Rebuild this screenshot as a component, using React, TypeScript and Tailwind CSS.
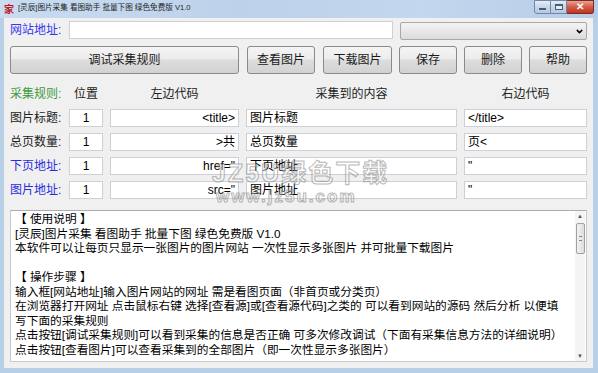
import { ChevronDown } from "lucide-react";

const font = "font-['Liberation_Sans','Noto_Sans_CJK_SC',sans-serif]";
const btn =
  "h-[28px] rounded-[3px] border border-[#8a8a8a] bg-[linear-gradient(#f4f4f4,#ececec_45%,#dddddd_50%,#d2d2d2)] text-[12px] text-[#1a1a1a] flex items-center justify-center";
const field = "h-[18px] bg-white border border-[#cdd0d6] text-[12px] leading-[16px] text-black px-[3px] overflow-hidden whitespace-nowrap";

const rows = [
  { label: "图片标题:", color: "text-[#222]", left: "<title>", content: "图片标题", right: "</title>" },
  { label: "总页数量:", color: "text-[#222]", left: ">共", content: "总页数量", right: "页<", focus: true },
  { label: "下页地址:", color: "text-[#2b2bdf]", left: 'href="', content: "下页地址", right: '"' },
  { label: "图片地址:", color: "text-[#2b2bdf]", left: 'src="', content: "图片地址", right: '"' },
];

const lines = [
  "【 使用说明 】",
  "[灵辰]图片采集 看图助手 批量下图 绿色免费版 V1.0",
  "本软件可以让每页只显示一张图片的图片网站 一次性显示多张图片 并可批量下载图片",
  "",
  "【 操作步骤 】",
  "输入框[网站地址]输入图片网站的网址 需是看图页面（非首页或分类页）",
  "在浏览器打开网址 点击鼠标右键 选择[查看源]或[查看源代码]之类的 可以看到网站的源码 然后分析 以便填",
  "写下面的采集规则",
  "点击按钮[调试采集规则]可以看到采集的信息是否正确 可多次修改调试（下面有采集信息方法的详细说明）",
  "点击按钮[查看图片]可以查看采集到的全部图片（即一次性显示多张图片）",
];

function TitleBar() {
  return (
    <div className="h-[18px] flex items-start bg-[linear-gradient(90deg,#c9dcf0,#bcd2ea_40%,#c3d7ee_70%,#b6cde8)]">
      <div className="w-[11px] h-[11px] ml-[4px] mt-[3px] text-[10px] leading-[11px] font-bold text-[#c0161c] font-['Noto_Sans_CJK_SC',sans-serif]">
        家
      </div>
      <div className="ml-[3px] mt-[3px] text-[7.6px] leading-[10px] text-[#1e1e1e] whitespace-nowrap">
        [灵辰]图片采集 看图助手 批量下图 绿色免费版 V1.0
      </div>
      <div className="ml-auto mr-[4px] flex">
        <div className="w-[17px] h-[14px] border border-[#6f86a4] rounded-bl-[3px] bg-[linear-gradient(#e4edf7,#c6d6ea_50%,#b5c9e2)] flex items-end justify-center pb-[3px]">
          <div className="w-[7px] h-[2px] bg-white border border-[#4a5c74]" />
        </div>
        <div className="w-[16px] h-[14px] border-y border-r border-[#6f86a4] bg-[linear-gradient(#e4edf7,#c6d6ea_50%,#b5c9e2)] flex items-center justify-center">
          <div className="w-[8px] h-[6px] border border-[#4a5c74] border-t-2 bg-white/60" />
        </div>
        <div className="w-[27px] h-[14px] border-y border-r border-[#7a2b24] rounded-br-[3px] bg-[linear-gradient(#e8a496,#d45a44_50%,#c2341e)] flex items-center justify-center text-white text-[10px] font-bold leading-none">
          ✕
        </div>
      </div>
    </div>
  );
}

export default function App() {
  return (
    <div className={`${font} w-[598px] h-[373px] bg-[#b8cfe8] flex flex-col relative overflow-hidden`}>
      <TitleBar />
      <div className="flex-1 ml-[4px] mr-[5px] mb-[5px] bg-[#f0f0f0] pl-[6px] pr-[6px] pt-[3px] flex flex-col">
        {/* url row */}
        <div className="flex items-start h-[19px]">
          <div className="w-[59px] text-[12px] leading-[18px] text-[#3737f0]">网站地址:</div>
          <div className={`${field} w-[324px]`} />
          <div className="ml-[7px] mt-[1px] w-[187px] h-[18px] rounded-[2px] border border-[#a9a9a9] bg-[linear-gradient(#f3f3f3,#e8e8e8_50%,#dcdcdc)] flex items-center justify-end pr-[2px]">
            <ChevronDown className="w-[9px] h-[9px] text-black" strokeWidth={4} />
          </div>
        </div>

        {/* buttons */}
        <div className="flex mt-[6px]">
          <div className={`${btn} w-[229px]`}>调试采集规则</div>
          <div className={`${btn} w-[68px] ml-[8px]`}>查看图片</div>
          <div className={`${btn} w-[69px] ml-[8px]`}>下载图片</div>
          <div className={`${btn} w-[58px] ml-[7px]`}>保存</div>
          <div className={`${btn} w-[58px] ml-[7px]`}>删除</div>
          <div className={`${btn} w-[58px] ml-[7px]`}>帮助</div>
        </div>

        {/* headers */}
        <div className="flex mt-[11px] h-[18px] text-[12px] leading-[18px] text-[#222]">
          <div className="w-[59px] text-[#3c9a3c]">采集规则:</div>
          <div className="w-[34px] text-center">位置</div>
          <div className="w-[129px] ml-[7px] text-center">左边代码</div>
          <div className="w-[211px] ml-[7px] text-center">采集到的内容</div>
          <div className="w-[123px] ml-[7px] text-center">右边代码</div>
        </div>

        {/* rule rows */}
        <div className="flex flex-col gap-[6px] mt-[6px]">
          {rows.map((r) => (
            <div key={r.label} className="flex items-center">
              <div className={`w-[59px] text-[12px] leading-[18px] ${r.color}`}>{r.label}</div>
              <div className={`${field} w-[34px] text-center`}>1</div>
              <div className={`${field} w-[129px] ml-[7px] text-right ${r.focus ? "border-[#8cbbe8]" : ""}`}>{r.left}</div>
              <div className={`${field} w-[211px] ml-[7px]`}>{r.content}</div>
              <div className={`${field} w-[123px] ml-[7px]`}>{r.right}</div>
            </div>
          ))}
        </div>

        {/* memo */}
        <div className="mt-[11px] h-[152px] bg-white border border-[#c6c9cf] border-t-[#abadb3] flex">
          <div className="flex-1 pl-[4px] pt-[1px] text-[11.7px] leading-[14.5px] text-black overflow-hidden">
            {lines.map((l, i) => (
              <div key={i} className="h-[14.5px] whitespace-nowrap">
                {l}
              </div>
            ))}
          </div>
          <div className="w-[10px] mr-[1px] flex flex-col items-center bg-[#f4f4f4]">
            <div className="text-[6px] leading-[10px] text-[#555]">▲</div>
            <div className="w-[9px] h-[31px] mt-[2px] rounded-[2px] border border-[#a0a0a0] bg-[linear-gradient(90deg,#f2f2f2,#dedede)] flex items-center justify-center">
              <div className="w-[3px] h-[5px] border-y border-[#888]" />
            </div>
            <div className="mt-auto text-[6px] leading-[10px] text-[#555]">▼</div>
          </div>
        </div>
      </div>

      {/* watermark */}
      <div className="absolute left-[212px] top-[158px] pointer-events-none select-none opacity-60">
        <div className="text-[25px] leading-[30px] font-bold text-white/50 whitespace-nowrap [-webkit-text-stroke:1px_#8a8a8a] tracking-[2px]">
          JZ5U绿色下载
        </div>
        <div className="ml-[4px] text-[17px] leading-[18px] font-bold text-white/50 whitespace-nowrap [-webkit-text-stroke:1px_#8a8a8a] tracking-[2px]">
          www.jz5u.com
        </div>
      </div>
    </div>
  );
}
